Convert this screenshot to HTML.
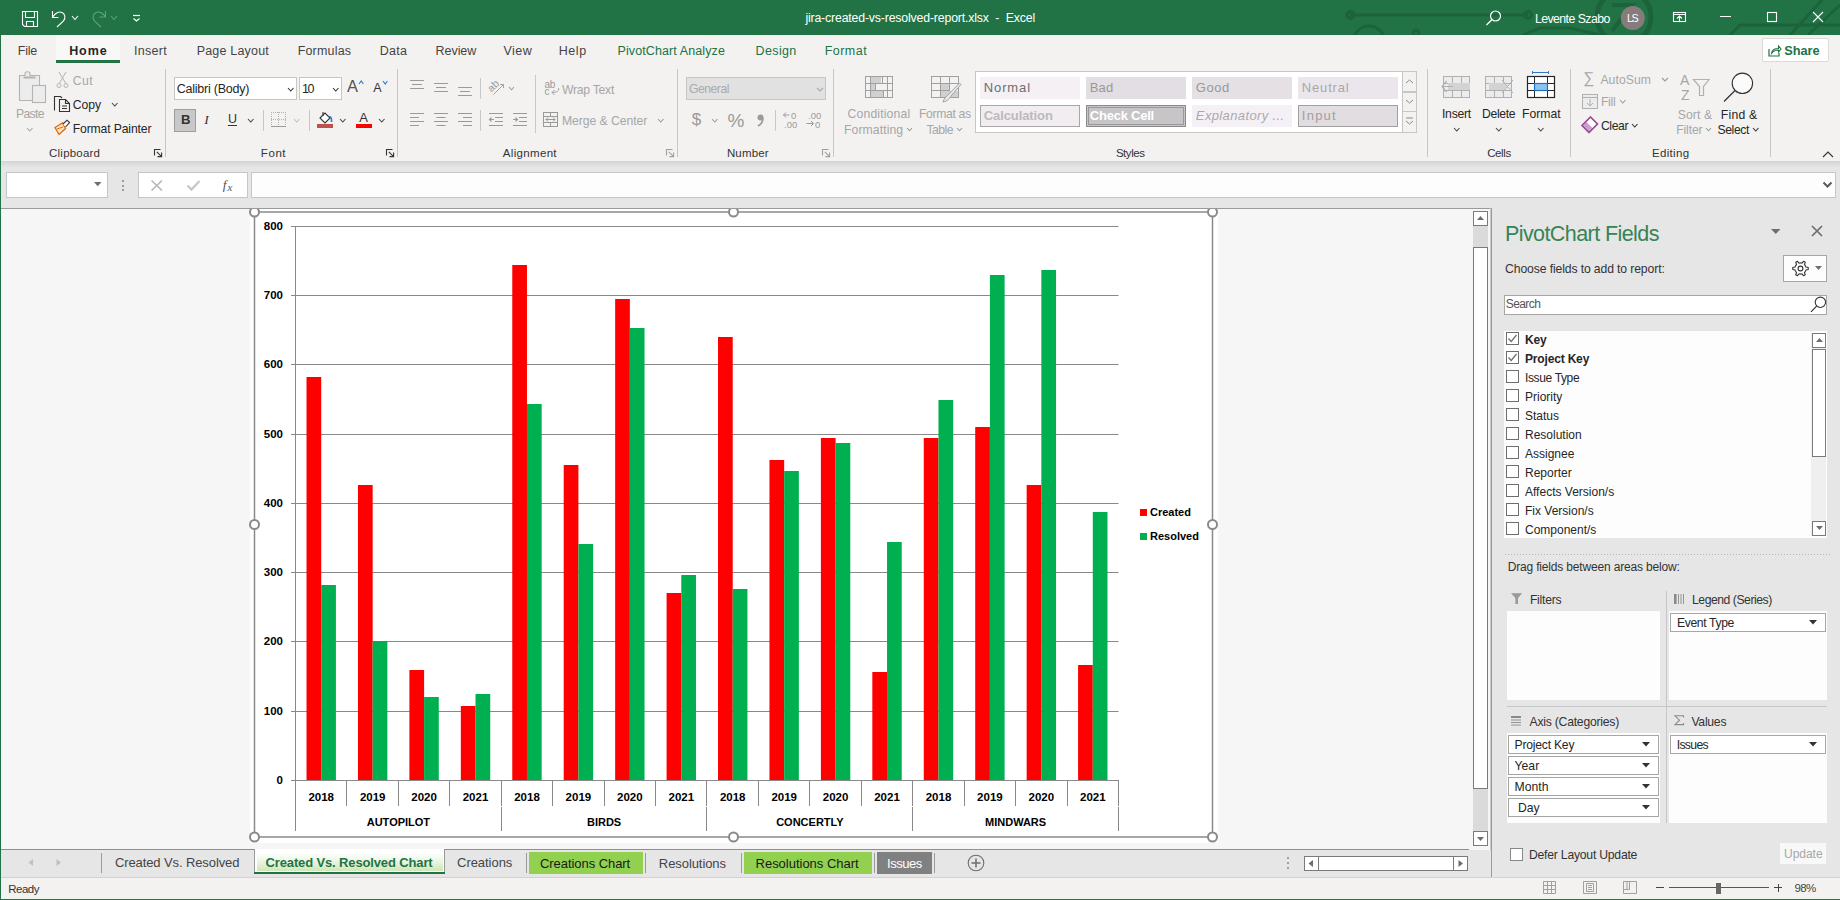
<!DOCTYPE html>
<html><head><meta charset="utf-8">
<style>
*{margin:0;padding:0;box-sizing:border-box}
html,body{width:1840px;height:900px;overflow:hidden;background:#f3f2f1;font-family:"Liberation Sans",sans-serif;color:#262626}
.a{position:absolute;white-space:pre}
svg{overflow:visible}

.tb{position:absolute;left:0;top:0;width:1840px;height:35px;background:#217346}
.rib{position:absolute;left:1px;top:35px;width:1839px;height:127px;background:#f3f2f1}
.fbar{position:absolute;left:1px;top:162px;width:1839px;height:46px;background:#e6e6e6}
.ws{position:absolute;left:1px;top:208px;width:1490px;height:642px;background:#f6f6f6;border-top:1px solid #9a9a9a}
.st{position:absolute;left:1px;top:850px;width:1490px;height:27px;background:#e6e6e6}
.sb{position:absolute;left:1px;top:877px;width:1839px;height:22px;background:#f3f2f1;border-top:1px solid #d2d2d2}
.pv{position:absolute;left:1491px;top:208px;width:349px;height:669px;background:#e6e6e6}
.ab{position:absolute}

</style></head><body>
<div class="tb"></div>
<div class="ab" style="left:0px;top:35px;width:1px;height:865px;background:#217346"></div>
<div class="ab" style="left:0px;top:899px;width:1840px;height:1px;background:#217346"></div>
<svg class="ab" style="left:1330px;top:0px;" width="510" height="35" viewBox="0 0 510 35">
<line x1="1350" y1="15" x2="1528" y2="15" stroke="#1c633c" stroke-width="3" transform="translate(-1330,0)"/>
<g transform="translate(-1330,0)" fill="none" stroke="#1c633c" stroke-width="3">
<circle cx="1350.5" cy="15" r="3.5"/><circle cx="1528" cy="15" r="3.5"/>
<circle cx="1369" cy="42" r="16"/><circle cx="1416" cy="33" r="3"/>
<circle cx="1624" cy="17" r="27" stroke-width="5"/>
<path d="M1612 5 H1632 L1612 31" stroke-width="4"/>
<path d="M1730 35 L1740 25 H1840"/>
<path d="M1790 35 L1822 0"/><path d="M1808 35 L1840 5"/>
<path d="M1523 35 L1540 28 H1570 L1600 35"/>
</g></svg>
<svg class="ab" style="left:20px;top:9px;" width="20" height="20" viewBox="0 0 20 20"><path d="M2.5 2.5 H17.5 V17.5 H4.5 L2.5 15.5 Z M5.5 2.5 V8.5 H14.5 V2.5 M6.5 17.5 V12.5 H13.5 V17.5" fill="none" stroke="#fff" stroke-width="1.1"/></svg>
<svg class="ab" style="left:50px;top:9px;" width="20" height="20" viewBox="0 0 20 20"><path d="M2.5 2 V8.5 H8.5 M2.8 8 C5 4 9 2 12 3.5 C15 5 16 8.5 13.5 12 L7 18" fill="none" stroke="#fff" stroke-width="1.1"/></svg>
<svg class="ab" style="left:71px;top:15px;" width="8" height="5.5" viewBox="0 0 8 5.5"><path d="M1 1 L4.0 4.5 L7 1" fill="none" stroke="#fff" stroke-width="1.1"/></svg>
<svg class="ab" style="left:89px;top:9px;" width="20" height="20" viewBox="0 0 20 20"><path d="M16.5 2 V8 H10.5 M16.2 7.5 C14 4 10 2 7 3.5 C4 5 3 8.5 5.5 12 L12 18" fill="none" stroke="#5f9f7c" stroke-width="1.1"/></svg>
<svg class="ab" style="left:110px;top:15px;" width="8" height="5.5" viewBox="0 0 8 5.5"><path d="M1 1 L4.0 4.5 L7 1" fill="none" stroke="#5f9f7c" stroke-width="1.1"/></svg>
<svg class="ab" style="left:132px;top:11px;" width="10" height="12" viewBox="0 0 10 12"><path d="M1 4.5 H8" stroke="#fff" stroke-width="1.2"/><path d="M1.5 7.5 L4.5 10 L7.5 7.5" fill="none" stroke="#fff" stroke-width="1.2"/></svg>
<div class="a" style="left:805.38px;top:12.13px;font-size:12.3px;line-height:12.3px;color:#fff;letter-spacing:-0.164px">jira-created-vs-resolved-report.xlsx  -  Excel</div>
<svg class="ab" style="left:1484px;top:8px;" width="20" height="20" viewBox="0 0 20 20"><circle cx="11.5" cy="8" r="5" fill="none" stroke="#fff" stroke-width="1.2"/><path d="M7.8 11.7 L2.5 17" stroke="#fff" stroke-width="1.3"/></svg>
<div class="a" style="left:1534.88px;top:13.13px;font-size:12.3px;line-height:12.3px;color:#fff;letter-spacing:-0.551px">Levente Szabo</div>
<svg class="ab" style="left:1620px;top:5px;" width="26" height="26" viewBox="0 0 26 26"><circle cx="12.8" cy="12.9" r="12" fill="#877c7d"/></svg>
<div class="a" style="left:1626.96px;top:13.27px;font-size:10.8px;line-height:10.8px;color:#fff;letter-spacing:-1.500px">LS</div>
<svg class="ab" style="left:1672px;top:11px;" width="16" height="12" viewBox="0 0 16 12"><rect x="1.5" y="1.5" width="12" height="9" fill="none" stroke="#fff" stroke-width="1.1"/><path d="M1.5 3.5 H13.5 M7.5 10.5 V5 M5 7.5 L7.5 5 L10 7.5" fill="none" stroke="#fff" stroke-width="1.1"/></svg>
<div class="ab" style="left:1720px;top:16px;width:11px;height:1px;background:#fff"></div>
<svg class="ab" style="left:1766px;top:11px;" width="12" height="12" viewBox="0 0 12 12"><rect x="1.5" y="1.5" width="9" height="9" fill="none" stroke="#fff" stroke-width="1.1"/></svg>
<svg class="ab" style="left:1812px;top:11px;" width="12" height="12" viewBox="0 0 12 12"><path d="M1 1 L11 11 M11 1 L1 11" stroke="#fff" stroke-width="1.1"/></svg>
<div class="rib"></div>
<div class="ab" style="left:56px;top:35px;width:64px;height:28px;background:#f9f8f7"></div>
<div class="ab" style="left:56px;top:60px;width:64px;height:3px;background:#217346"></div>
<div class="a" style="left:17.68px;top:44.90px;font-size:12.5px;line-height:12.5px;color:#444;letter-spacing:-0.169px">File</div>
<div class="a" style="left:133.88px;top:44.90px;font-size:12.5px;line-height:12.5px;color:#444;letter-spacing:0.297px">Insert</div>
<div class="a" style="left:196.68px;top:44.90px;font-size:12.5px;line-height:12.5px;color:#444;letter-spacing:0.195px">Page Layout</div>
<div class="a" style="left:297.68px;top:44.90px;font-size:12.5px;line-height:12.5px;color:#444;letter-spacing:0.179px">Formulas</div>
<div class="a" style="left:379.68px;top:44.90px;font-size:12.5px;line-height:12.5px;color:#444;letter-spacing:0.315px">Data</div>
<div class="a" style="left:435.57px;top:44.90px;font-size:12.5px;line-height:12.5px;color:#444;letter-spacing:-0.050px">Review</div>
<div class="a" style="left:503.57px;top:44.90px;font-size:12.5px;line-height:12.5px;color:#444;letter-spacing:0.425px">View</div>
<div class="a" style="left:558.67px;top:44.90px;font-size:12.5px;line-height:12.5px;color:#444;letter-spacing:0.577px">Help</div>
<div class="a" style="left:69.17px;top:44.90px;font-size:12.5px;line-height:12.5px;color:#262626;font-weight:700;letter-spacing:0.905px">Home</div>
<div class="a" style="left:617.48px;top:44.90px;font-size:12.5px;line-height:12.5px;color:#217346;letter-spacing:0.108px">PivotChart Analyze</div>
<div class="a" style="left:755.58px;top:44.90px;font-size:12.5px;line-height:12.5px;color:#217346;letter-spacing:0.366px">Design</div>
<div class="a" style="left:824.67px;top:44.90px;font-size:12.5px;line-height:12.5px;color:#217346;letter-spacing:0.471px">Format</div>
<div class="ab" style="left:1762px;top:38px;width:67px;height:24px;background:#fff;border:1px solid #dcdad8;border-radius:2px"></div>
<svg class="ab" style="left:1768px;top:44px;" width="14" height="13" viewBox="0 0 14 13"><path d="M1 5 V12 H11 V9" fill="none" stroke="#217346" stroke-width="1.2"/><path d="M3.5 9.5 C4 6 7 4.5 10.5 4.5 V2 L13 5 L10.5 8 V6 C8 6 5.5 7 3.5 9.5Z" fill="none" stroke="#217346" stroke-width="1.1"/></svg>
<div class="a" style="left:1784.36px;top:44.85px;font-size:12.8px;line-height:12.8px;color:#217346;font-weight:700;letter-spacing:-0.075px">Share</div>
<svg class="ab" style="left:17px;top:71px;" width="32" height="34" viewBox="0 0 32 34">
<path d="M2.5 4.5 H8 V2.5 C8 1.5 9 0.8 10.5 0.8 C12 0.8 13 1.5 13 2.5 V4.5 H22.5 V29.5 H2.5 Z" fill="#ececec" stroke="#b3b3b3" stroke-width="1.1"/>
<path d="M6.5 6.5 H18.5" stroke="#b3b3b3" stroke-width="2"/>
<rect x="15.5" y="14.5" width="13" height="17" fill="#ececec" stroke="#b3b3b3" stroke-width="1.1"/></svg>
<div class="a" style="left:16.09px;top:108.15px;font-size:12.2px;line-height:12.2px;color:#a6a6a6;letter-spacing:-0.688px">Paste</div>
<svg class="ab" style="left:26px;top:127px;" width="7.5" height="5" viewBox="0 0 7.5 5"><path d="M1 1 L3.75 4 L6.5 1" fill="none" stroke="#a6a6a6" stroke-width="1.1"/></svg>
<svg class="ab" style="left:56px;top:71px;" width="13" height="18" viewBox="0 0 13 18"><path d="M3 1 L9.5 12 M10 1 L3.5 12" stroke="#b3b3b3" stroke-width="1"/><circle cx="3" cy="14.5" r="2" fill="none" stroke="#b3b3b3"/><circle cx="10" cy="14.5" r="2" fill="none" stroke="#b3b3b3"/></svg>
<div class="a" style="left:72.69px;top:75.45px;font-size:12.2px;line-height:12.2px;color:#a6a6a6;letter-spacing:0.476px">Cut</div>
<svg class="ab" style="left:53px;top:95px;" width="18" height="18" viewBox="0 0 18 18"><path d="M1.5 15.5 V1.5 H7.5 L9 3" fill="none" stroke="#333" stroke-width="1.1"/><path d="M6.5 4.5 H12.5 L16.5 8.5 V16.5 H6.5 Z M12.5 4.5 V8.5 H16.5 M9 11 H14 M9 13.5 H14" fill="none" stroke="#333" stroke-width="1.1"/></svg>
<div class="a" style="left:72.69px;top:99.05px;font-size:12.2px;line-height:12.2px;color:#262626;letter-spacing:0.022px">Copy</div>
<svg class="ab" style="left:110.7px;top:102px;" width="7.5" height="5" viewBox="0 0 7.5 5"><path d="M1 1 L3.75 4 L6.5 1" fill="none" stroke="#444" stroke-width="1.1"/></svg>
<svg class="ab" style="left:53px;top:119px;" width="18" height="17" viewBox="0 0 18 17"><path d="M2 8.5 L9.5 4 L12.5 9.5 L6 15.5 Z" fill="#fbe3c8" stroke="#e36c0a" stroke-width="1.3"/>
<path d="M4 10 L10 8" stroke="#e36c0a" stroke-width="1"/>
<path d="M10 5 L14 1.2 L16.5 3.5 L12.5 8" fill="#fff" stroke="#333" stroke-width="1.1"/></svg>
<div class="a" style="left:72.69px;top:123.15px;font-size:12.2px;line-height:12.2px;color:#262626;letter-spacing:-0.138px">Format Painter</div>
<div class="a" style="left:49.12px;top:148.06px;font-size:11.5px;line-height:11.5px;color:#333;letter-spacing:0.202px">Clipboard</div>
<svg class="ab" style="left:154px;top:149px;" width="10" height="10" viewBox="0 0 10 10"><path d="M0.5 6.5 V0.5 H6.5" fill="none" stroke="#333" stroke-width="1.1"/><path d="M2.8 2.8 L7.6 7.6 M3.5 7.6 H7.6 V3.5" fill="none" stroke="#333" stroke-width="1.1"/></svg>
<div class="ab" style="left:165px;top:69px;width:1px;height:88px;background:#c8c6c4"></div>
<div class="ab" style="left:174px;top:77px;width:123px;height:23px;background:#fff;border:1px solid #c6c6c6"></div>
<div class="a" style="left:176.78px;top:82.70px;font-size:12.5px;line-height:12.5px;color:#262626;letter-spacing:-0.244px">Calibri (Body)</div>
<svg class="ab" style="left:287px;top:87px;" width="7.5" height="5" viewBox="0 0 7.5 5"><path d="M1 1 L3.75 4 L6.5 1" fill="none" stroke="#333" stroke-width="1.1"/></svg>
<div class="ab" style="left:299px;top:77px;width:43px;height:23px;background:#fff;border:1px solid #c6c6c6"></div>
<div class="a" style="left:302.07px;top:82.70px;font-size:12.5px;line-height:12.5px;color:#262626;letter-spacing:-1.500px">10</div>
<svg class="ab" style="left:332px;top:87px;" width="7.5" height="5" viewBox="0 0 7.5 5"><path d="M1 1 L3.75 4 L6.5 1" fill="none" stroke="#333" stroke-width="1.1"/></svg>
<div class="a" style="left:347.07px;top:78.36px;font-size:16.5px;line-height:16.5px;color:#555">A</div>
<svg class="ab" style="left:358px;top:80px;" width="7" height="5" viewBox="0 0 7 5"><path d="M1 4 L3.2 1 L5.4 4" fill="none" stroke="#2b79d0" stroke-width="1.1"/></svg>
<div class="a" style="left:373.18px;top:82.20px;font-size:12.5px;line-height:12.5px;color:#333">A</div>
<svg class="ab" style="left:382px;top:80px;" width="7" height="5" viewBox="0 0 7 5"><path d="M1 1 L3.2 4 L5.4 1" fill="none" stroke="#2b79d0" stroke-width="1.1"/></svg>
<div class="ab" style="left:174px;top:109px;width:22px;height:23px;background:#c8c8c8;border:1px solid #9d9d9d"></div>
<div class="a" style="left:180.94px;top:113.39px;font-size:13.2px;line-height:13.2px;color:#333;font-weight:700">B</div>
<div class="a" style="left:204.32px;top:112.74px;font-size:13.5px;line-height:13.5px;color:#333;font-style:italic;font-family:'Liberation Serif',serif">I</div>
<div class="a" style="left:227.88px;top:112.90px;font-size:12.5px;line-height:12.5px;color:#333">U</div>
<div class="ab" style="left:228px;top:125px;width:9px;height:1px;background:#333"></div>
<svg class="ab" style="left:246.5px;top:118px;" width="7.5" height="5" viewBox="0 0 7.5 5"><path d="M1 1 L3.75 4 L6.5 1" fill="none" stroke="#444" stroke-width="1.1"/></svg>
<div class="ab" style="left:263px;top:110px;width:1px;height:21px;background:#c8c6c4"></div>
<svg class="ab" style="left:270px;top:111px;" width="17" height="17" viewBox="0 0 17 17"><g fill="#b3b3b3"><rect x="1" y="1" width="1" height="1"/><rect x="1" y="11" width="1" height="1"/><rect x="1" y="13" width="1" height="1"/><rect x="1" y="15" width="1" height="1"/><rect x="1" y="3" width="1" height="1"/><rect x="1" y="5" width="1" height="1"/><rect x="1" y="7" width="1" height="1"/><rect x="1" y="8" width="1" height="1"/><rect x="1" y="9" width="1" height="1"/><rect x="11" y="1" width="1" height="1"/><rect x="11" y="8" width="1" height="1"/><rect x="13" y="1" width="1" height="1"/><rect x="13" y="8" width="1" height="1"/><rect x="15" y="1" width="1" height="1"/><rect x="15" y="11" width="1" height="1"/><rect x="15" y="13" width="1" height="1"/><rect x="15" y="15" width="1" height="1"/><rect x="15" y="3" width="1" height="1"/><rect x="15" y="5" width="1" height="1"/><rect x="15" y="7" width="1" height="1"/><rect x="15" y="8" width="1" height="1"/><rect x="15" y="9" width="1" height="1"/><rect x="3" y="1" width="1" height="1"/><rect x="3" y="8" width="1" height="1"/><rect x="5" y="1" width="1" height="1"/><rect x="5" y="8" width="1" height="1"/><rect x="7" y="1" width="1" height="1"/><rect x="7" y="8" width="1" height="1"/><rect x="8" y="1" width="1" height="1"/><rect x="8" y="11" width="1" height="1"/><rect x="8" y="13" width="1" height="1"/><rect x="8" y="15" width="1" height="1"/><rect x="8" y="3" width="1" height="1"/><rect x="8" y="5" width="1" height="1"/><rect x="8" y="7" width="1" height="1"/><rect x="8" y="9" width="1" height="1"/><rect x="9" y="1" width="1" height="1"/><rect x="9" y="8" width="1" height="1"/></g><path d="M1 15.5 H16" stroke="#9a9a9a" stroke-width="1"/></svg>
<svg class="ab" style="left:292.5px;top:118px;" width="7.5" height="5" viewBox="0 0 7.5 5"><path d="M1 1 L3.75 4 L6.5 1" fill="none" stroke="#c0c0c0" stroke-width="1.1"/></svg>
<div class="ab" style="left:309px;top:110px;width:1px;height:21px;background:#c8c6c4"></div>
<svg class="ab" style="left:317px;top:111px;" width="17" height="18" viewBox="0 0 17 18"><path d="M3 7 L8 2 L13 7 L8 12 Z" fill="#fff" stroke="#333" stroke-width="1.1"/><path d="M6 1 V5" stroke="#333" stroke-width="1.1"/><path d="M11.5 5.5 C13.5 5.5 14.5 7 14.5 9 V11" fill="none" stroke="#2b79d0" stroke-width="1.6"/><rect x="0" y="13" width="16" height="4" fill="#c0504d"/></svg>
<svg class="ab" style="left:338.5px;top:118px;" width="7.5" height="5" viewBox="0 0 7.5 5"><path d="M1 1 L3.75 4 L6.5 1" fill="none" stroke="#444" stroke-width="1.1"/></svg>
<div class="a" style="left:359.15px;top:111.12px;font-size:13px;line-height:13px;color:#333">A</div>
<div class="ab" style="left:356px;top:124px;width:16px;height:4px;background:#ff0000"></div>
<svg class="ab" style="left:377.5px;top:118px;" width="7.5" height="5" viewBox="0 0 7.5 5"><path d="M1 1 L3.75 4 L6.5 1" fill="none" stroke="#444" stroke-width="1.1"/></svg>
<div class="a" style="left:260.82px;top:148.06px;font-size:11.5px;line-height:11.5px;color:#333;letter-spacing:0.578px">Font</div>
<svg class="ab" style="left:386px;top:149px;" width="10" height="10" viewBox="0 0 10 10"><path d="M0.5 6.5 V0.5 H6.5" fill="none" stroke="#333" stroke-width="1.1"/><path d="M2.8 2.8 L7.6 7.6 M3.5 7.6 H7.6 V3.5" fill="none" stroke="#333" stroke-width="1.1"/></svg>
<div class="ab" style="left:397px;top:69px;width:1px;height:88px;background:#c8c6c4"></div>
<svg class="ab" style="left:410px;top:80px;" width="15" height="11" viewBox="0 0 15 11"><path d="M0 0.5 H14 M2 4.5 H12 M0 8.5 H14" stroke="#9a9a9a" stroke-width="1.2"/></svg>
<svg class="ab" style="left:434px;top:83px;" width="15" height="11" viewBox="0 0 15 11"><path d="M0 0.5 H14 M2 4.5 H12 M0 8.5 H14" stroke="#9a9a9a" stroke-width="1.2"/></svg>
<svg class="ab" style="left:458px;top:87px;" width="15" height="11" viewBox="0 0 15 11"><path d="M0 0.5 H14 M2 4.5 H12 M0 8.5 H14" stroke="#9a9a9a" stroke-width="1.2"/></svg>
<div class="ab" style="left:480px;top:78px;width:1px;height:21px;background:#c8c8c8"></div>
<svg class="ab" style="left:485px;top:77px;" width="22" height="20" viewBox="0 0 22 20"><text x="0" y="0" transform="translate(6.5 15.5) rotate(-45)" font-family="Liberation Sans" font-size="10.5" fill="#9a9a9a">ab</text><path d="M8.5 17.5 L18.5 7.5" stroke="#9a9a9a" stroke-width="0.9"/><path d="M15 7.5 H18.5 V11" fill="none" stroke="#9a9a9a" stroke-width="0.9"/></svg>
<svg class="ab" style="left:508px;top:86px;" width="7" height="4.8" viewBox="0 0 7 4.8"><path d="M1 1 L3.5 3.8 L6 1" fill="none" stroke="#9a9a9a" stroke-width="1.1"/></svg>
<div class="ab" style="left:535px;top:75px;width:1px;height:58px;background:#c8c8c8"></div>
<svg class="ab" style="left:544px;top:78px;" width="17" height="18" viewBox="0 0 17 18"><text x="0.5" y="9.5" font-family="Liberation Sans" font-size="10" fill="#9a9a9a" letter-spacing="-0.3">ab</text><text x="0.5" y="16.5" font-family="Liberation Sans" font-size="10" fill="#9a9a9a">c</text><path d="M14.5 10 C15.5 12.5 13 14.5 8 14.5 M10.5 12 L8 14.5 L10.5 17" fill="none" stroke="#9a9a9a" stroke-width="0.9"/></svg>
<div class="a" style="left:561.99px;top:83.55px;font-size:12.2px;line-height:12.2px;color:#a6a6a6;letter-spacing:-0.263px">Wrap Text</div>
<svg class="ab" style="left:410px;top:113px;" width="15" height="13" viewBox="0 0 15 13"><path d="M0 0.5 H14 M0 4.5 H9 M0 8.5 H14 M0 12.5 H9" stroke="#9a9a9a" stroke-width="1.2"/></svg>
<svg class="ab" style="left:434px;top:113px;" width="15" height="13" viewBox="0 0 15 13"><path d="M0 0.5 H14 M2.5 4.5 H11.5 M0 8.5 H14 M2.5 12.5 H11.5" stroke="#9a9a9a" stroke-width="1.2"/></svg>
<svg class="ab" style="left:458px;top:113px;" width="15" height="13" viewBox="0 0 15 13"><path d="M0 0.5 H14 M5 4.5 H14 M0 8.5 H14 M5 12.5 H14" stroke="#9a9a9a" stroke-width="1.2"/></svg>
<div class="ab" style="left:480px;top:110px;width:1px;height:21px;background:#c8c8c8"></div>
<svg class="ab" style="left:489px;top:113px;" width="15" height="13" viewBox="0 0 15 13"><path d="M0 0.5 H14 M6 4.5 H14 M0 12.5 H14 M6 8.5 H14 M5 6.5 H0.5 M2.5 4.5 L0.5 6.5 L2.5 8.5" fill="none" stroke="#9a9a9a" stroke-width="1.1"/></svg>
<svg class="ab" style="left:513px;top:113px;" width="15" height="13" viewBox="0 0 15 13"><path d="M0 0.5 H14 M6 4.5 H14 M0 12.5 H14 M6 8.5 H14 M0 6.5 H4.5 M2.5 4.5 L4.5 6.5 L2.5 8.5" fill="none" stroke="#9a9a9a" stroke-width="1.1"/></svg>
<svg class="ab" style="left:543px;top:112px;" width="16" height="16" viewBox="0 0 16 16"><rect x="0.5" y="0.5" width="14" height="14" fill="none" stroke="#9a9a9a"/><path d="M0.5 4.5 H14.5 M0.5 10.5 H14.5 M7.5 0.5 V4.5 M7.5 10.5 V14.5 M3 7.5 H12 M5 5.5 L3 7.5 L5 9.5 M10 5.5 L12 7.5 L10 9.5" fill="none" stroke="#9a9a9a" stroke-width="1"/></svg>
<div class="a" style="left:561.99px;top:114.75px;font-size:12.2px;line-height:12.2px;color:#a6a6a6;letter-spacing:-0.055px">Merge &amp; Center</div>
<svg class="ab" style="left:656.5px;top:118px;" width="7.5" height="5" viewBox="0 0 7.5 5"><path d="M1 1 L3.75 4 L6.5 1" fill="none" stroke="#9a9a9a" stroke-width="1.1"/></svg>
<div class="a" style="left:502.82px;top:148.06px;font-size:11.5px;line-height:11.5px;color:#333;letter-spacing:0.326px">Alignment</div>
<svg class="ab" style="left:666px;top:149px;" width="10" height="10" viewBox="0 0 10 10"><path d="M0.5 6.5 V0.5 H6.5" fill="none" stroke="#a0a0a0" stroke-width="1.1"/><path d="M2.8 2.8 L7.6 7.6 M3.5 7.6 H7.6 V3.5" fill="none" stroke="#a0a0a0" stroke-width="1.1"/></svg>
<div class="ab" style="left:677px;top:69px;width:1px;height:88px;background:#c8c6c4"></div>
<div class="ab" style="left:686px;top:77px;width:140px;height:23px;background:#e1e1e1;border:1px solid #c6c6c6"></div>
<div class="a" style="left:689.09px;top:82.55px;font-size:12.2px;line-height:12.2px;color:#ababab;letter-spacing:-0.507px">General</div>
<svg class="ab" style="left:815.5px;top:87px;" width="8" height="5" viewBox="0 0 8 5"><path d="M1 1 L4.0 4 L7 1" fill="none" stroke="#aaa" stroke-width="1.1"/></svg>
<div class="a" style="left:691.65px;top:110.98px;font-size:17px;line-height:17px;color:#9a9a9a">$</div>
<svg class="ab" style="left:710.7px;top:118px;" width="7.5" height="5" viewBox="0 0 7.5 5"><path d="M1 1 L3.75 4 L6.5 1" fill="none" stroke="#9a9a9a" stroke-width="1.1"/></svg>
<div class="a" style="left:727.55px;top:110.66px;font-size:19px;line-height:19px;color:#9a9a9a">%</div>
<svg class="ab" style="left:756px;top:114px;" width="9" height="13" viewBox="0 0 9 13"><circle cx="4.5" cy="3.5" r="3" fill="#9a9a9a"/><path d="M6.8 4 C7 8 5 10.5 2 12" fill="none" stroke="#9a9a9a" stroke-width="1.8"/></svg>
<div class="ab" style="left:775px;top:110px;width:1px;height:21px;background:#c8c8c8"></div>
<svg class="ab" style="left:782px;top:110px;" width="18" height="19" viewBox="0 0 18 19"><path d="M1.5 5 H7.5 M4 2.5 L1.5 5 L4 7.5" fill="none" stroke="#9a9a9a" stroke-width="1"/><text x="9" y="9" font-family="Liberation Sans" font-size="9.5" fill="#9a9a9a">0</text><text x="2" y="18" font-family="Liberation Sans" font-size="9.5" fill="#9a9a9a">.00</text></svg>
<svg class="ab" style="left:806px;top:110px;" width="18" height="19" viewBox="0 0 18 19"><text x="2" y="9" font-family="Liberation Sans" font-size="9.5" fill="#9a9a9a">.00</text><path d="M0.5 13.5 H7.5 M5 11 L7.5 13.5 L5 16" fill="none" stroke="#9a9a9a" stroke-width="1"/><text x="9" y="18" font-family="Liberation Sans" font-size="9.5" fill="#9a9a9a">0</text></svg>
<div class="a" style="left:726.92px;top:148.06px;font-size:11.5px;line-height:11.5px;color:#333;letter-spacing:0.149px">Number</div>
<svg class="ab" style="left:822px;top:149px;" width="10" height="10" viewBox="0 0 10 10"><path d="M0.5 6.5 V0.5 H6.5" fill="none" stroke="#a0a0a0" stroke-width="1.1"/><path d="M2.8 2.8 L7.6 7.6 M3.5 7.6 H7.6 V3.5" fill="none" stroke="#a0a0a0" stroke-width="1.1"/></svg>
<div class="ab" style="left:833px;top:69px;width:1px;height:88px;background:#c8c6c4"></div>
<svg class="ab" style="left:864px;top:75px;" width="30" height="24" viewBox="0 0 30 24"><rect x="6" y="2" width="11" height="6" fill="#d0d0d0"/><rect x="6" y="9" width="5" height="6" fill="#d0d0d0"/><rect x="6" y="16" width="13" height="6" fill="#d0d0d0"/>
<g fill="none" stroke="#a0a0a0" stroke-width="1"><rect x="1.5" y="1.5" width="27" height="21"/><path d="M1.5 8.5 H28.5 M1.5 15.5 H28.5 M6.5 1.5 V22.5 M23.5 1.5 V22.5 M18.5 1.5 V8.5 M11.5 8.5 V15.5 M19.5 15.5 V22.5"/></g></svg>
<div class="a" style="left:847.59px;top:108.15px;font-size:12.2px;line-height:12.2px;color:#a6a6a6;letter-spacing:0.154px">Conditional</div>
<div class="a" style="left:843.99px;top:123.75px;font-size:12.2px;line-height:12.2px;color:#a6a6a6;letter-spacing:0.097px">Formatting</div>
<svg class="ab" style="left:906px;top:127px;" width="7" height="4.8" viewBox="0 0 7 4.8"><path d="M1 1 L3.5 3.8 L6 1" fill="none" stroke="#9a9a9a" stroke-width="1.1"/></svg>
<svg class="ab" style="left:930px;top:75px;" width="32" height="29" viewBox="0 0 32 29"><rect x="10" y="9" width="9" height="6" fill="#d0d0d0"/><rect x="10" y="16" width="18" height="6" fill="#d0d0d0"/>
<g fill="none" stroke="#a0a0a0" stroke-width="1"><rect x="1.5" y="1.5" width="27" height="21"/><path d="M1.5 8.5 H28.5 M1.5 15.5 H20 M10.5 1.5 V22.5 M19.5 1.5 V16"/></g>
<path d="M29.5 8 L31 9.5 L21 21 C20 23 18 26 13 27 C14 24 16 21 18.5 19.5 Z" fill="#e8e8e8" stroke="#a0a0a0" stroke-width="1"/></svg>
<div class="a" style="left:918.99px;top:108.15px;font-size:12.2px;line-height:12.2px;color:#a6a6a6;letter-spacing:-0.355px">Format as</div>
<div class="a" style="left:926.39px;top:123.75px;font-size:12.2px;line-height:12.2px;color:#a6a6a6;letter-spacing:-0.480px">Table</div>
<svg class="ab" style="left:955.5px;top:127px;" width="7" height="4.8" viewBox="0 0 7 4.8"><path d="M1 1 L3.5 3.8 L6 1" fill="none" stroke="#9a9a9a" stroke-width="1.1"/></svg>
<div class="ab" style="left:975px;top:71px;width:428px;height:62px;background:#fff;border:1px solid #c6c6c6;border-right:none"></div>
<div class="ab" style="left:980px;top:77px;width:100px;height:22px;background:#f4f0f4"></div>
<div class="a" style="left:983.85px;top:81.12px;font-size:13px;line-height:13px;color:#6e6e6e;letter-spacing:0.859px">Normal</div>
<div class="ab" style="left:1086px;top:77px;width:100px;height:22px;background:#e3dee3"></div>
<div class="a" style="left:1089.85px;top:81.12px;font-size:13px;line-height:13px;color:#999;letter-spacing:0.080px">Bad</div>
<div class="ab" style="left:1192px;top:77px;width:100px;height:22px;background:#e4e0e4"></div>
<div class="a" style="left:1195.85px;top:81.12px;font-size:13px;line-height:13px;color:#999;letter-spacing:0.496px">Good</div>
<div class="ab" style="left:1298px;top:77px;width:100px;height:22px;background:#ebe6eb"></div>
<div class="a" style="left:1301.85px;top:81.12px;font-size:13px;line-height:13px;color:#a8a8a8;letter-spacing:0.813px">Neutral</div>
<div class="ab" style="left:980px;top:105px;width:100px;height:22px;background:#f1edf1;border:1px solid #a8a8a8"></div>
<div class="a" style="left:983.85px;top:109.12px;font-size:13px;line-height:13px;color:#bdb9bd;font-weight:700;letter-spacing:-0.108px">Calculation</div>
<div class="ab" style="left:1086px;top:105px;width:100px;height:22px;background:#c7c5c7;border:1px solid #8a8a8a"></div>
<div class="ab" style="left:1088px;top:107px;width:96px;height:18px;border:1px solid #9a9a9a"></div>
<div class="a" style="left:1089.85px;top:109.12px;font-size:13px;line-height:13px;color:#fff;font-weight:700;letter-spacing:-0.243px">Check Cell</div>
<div class="ab" style="left:1192px;top:105px;width:100px;height:22px;background:#f5f0f5"></div>
<div class="a" style="left:1195.85px;top:109.12px;font-size:13px;line-height:13px;color:#aaa;font-style:italic;letter-spacing:0.371px">Explanatory ...</div>
<div class="ab" style="left:1298px;top:105px;width:100px;height:22px;background:#e1dde1;border:1px solid #a0a0a0"></div>
<div class="a" style="left:1301.85px;top:109.12px;font-size:13px;line-height:13px;color:#a0a0a0;letter-spacing:1.220px">Input</div>
<div class="ab" style="left:1402px;top:71px;width:15px;height:21px;background:#f3f2f1;border:1px solid #c6c6c6"></div>
<div class="ab" style="left:1402px;top:92px;width:15px;height:20px;background:#f3f2f1;border:1px solid #c6c6c6"></div>
<div class="ab" style="left:1402px;top:111px;width:15px;height:22px;background:#f3f2f1;border:1px solid #c6c6c6"></div>
<svg class="ab" style="left:1405px;top:79px;" width="9" height="5" viewBox="0 0 9 5"><path d="M1 4 L4.5 1 L8 4" fill="none" stroke="#8a8a8a" stroke-width="1"/></svg>
<svg class="ab" style="left:1405px;top:99px;" width="9" height="5" viewBox="0 0 9 5"><path d="M1 1 L4.5 4 L8 1" fill="none" stroke="#8a8a8a" stroke-width="1"/></svg>
<svg class="ab" style="left:1405px;top:117px;" width="9" height="9" viewBox="0 0 9 9"><path d="M1 1 H8 M1 4 L4.5 7 L8 4" fill="none" stroke="#8a8a8a" stroke-width="1"/></svg>
<div class="a" style="left:1115.92px;top:148.06px;font-size:11.5px;line-height:11.5px;color:#333;letter-spacing:-0.456px">Styles</div>
<div class="ab" style="left:1427px;top:69px;width:1px;height:88px;background:#c8c6c4"></div>
<svg class="ab" style="left:1441px;top:75px;" width="32" height="24" viewBox="0 0 32 24"><rect x="2.5" y="1.5" width="26" height="21" fill="#ececec" stroke="#b0b0b0"/><path d="M2.5 8.5 H28.5 M2.5 15.5 H28.5 M11.5 1.5 V22.5 M20.5 1.5 V22.5" stroke="#b0b0b0"/>
<rect x="7" y="8" width="22" height="7" fill="#d3d3d3"/><path d="M1 11.5 H12 M5.5 6 L1 11.5 L5.5 17" fill="none" stroke="#b0b0b0" stroke-width="1.2"/></svg>
<div class="a" style="left:1441.99px;top:108.15px;font-size:12.2px;line-height:12.2px;color:#262626;letter-spacing:-0.253px">Insert</div>
<svg class="ab" style="left:1453px;top:127px;" width="7.5" height="5" viewBox="0 0 7.5 5"><path d="M1 1 L3.75 4 L6.5 1" fill="none" stroke="#444" stroke-width="1.1"/></svg>
<svg class="ab" style="left:1484px;top:75px;" width="32" height="24" viewBox="0 0 32 24"><rect x="1.5" y="1.5" width="26" height="21" fill="#ececec" stroke="#b0b0b0"/><path d="M1.5 8.5 H27.5 M1.5 15.5 H27.5 M10.5 1.5 V22.5 M19.5 1.5 V22.5" stroke="#b0b0b0"/>
<path d="M5 8 H20 L23 11.5 L20 15 H5 Z" fill="#d3d3d3"/><path d="M18 5 L29 18 M29 5 L18 18" stroke="#b0b0b0" stroke-width="1"/></svg>
<div class="a" style="left:1481.99px;top:108.15px;font-size:12.2px;line-height:12.2px;color:#262626;letter-spacing:-0.323px">Delete</div>
<svg class="ab" style="left:1495px;top:127px;" width="7.5" height="5" viewBox="0 0 7.5 5"><path d="M1 1 L3.75 4 L6.5 1" fill="none" stroke="#444" stroke-width="1.1"/></svg>
<svg class="ab" style="left:1526px;top:70px;" width="30" height="29" viewBox="0 0 30 29"><path d="M6.5 1 V4 M22.5 1 V4 M6.5 2.5 H22.5" stroke="#2b79d0" stroke-width="1"/>
<rect x="1.5" y="6.5" width="27" height="21" fill="#fff" stroke="#262626" stroke-width="1.2"/><path d="M1.5 13.5 H28.5 M1.5 20.5 H28.5 M8.5 6.5 V27.5 M21.5 6.5 V27.5" stroke="#262626" stroke-width="1"/>
<rect x="8.5" y="13.5" width="13" height="7" fill="#8fc3ef" stroke="#1f6fc5" stroke-width="1.2"/></svg>
<div class="a" style="left:1521.99px;top:108.15px;font-size:12.2px;line-height:12.2px;color:#262626">Format</div>
<svg class="ab" style="left:1537px;top:127px;" width="7.5" height="5" viewBox="0 0 7.5 5"><path d="M1 1 L3.75 4 L6.5 1" fill="none" stroke="#444" stroke-width="1.1"/></svg>
<div class="a" style="left:1487.22px;top:148.06px;font-size:11.5px;line-height:11.5px;color:#333;letter-spacing:-0.403px">Cells</div>
<div class="ab" style="left:1570px;top:69px;width:1px;height:88px;background:#c8c6c4"></div>
<div class="a" style="left:1583.22px;top:70.42px;font-size:15.5px;line-height:15.5px;color:#a6a6a6">∑</div>
<div class="a" style="left:1600.39px;top:74.05px;font-size:12.2px;line-height:12.2px;color:#a6a6a6;letter-spacing:0.080px">AutoSum</div>
<svg class="ab" style="left:1660.7px;top:77px;" width="8" height="5" viewBox="0 0 8 5"><path d="M1 1 L4.0 4 L7 1" fill="none" stroke="#9a9a9a" stroke-width="1.1"/></svg>
<svg class="ab" style="left:1582px;top:94px;" width="17" height="16" viewBox="0 0 17 16"><rect x="0.5" y="0.5" width="15" height="14" fill="#ececec" stroke="#b0b0b0"/><path d="M0.5 3.5 H15.5 M8 5 V12 M5 9 L8 12 L11 9" fill="none" stroke="#b0b0b0"/></svg>
<div class="a" style="left:1600.89px;top:96.05px;font-size:12.2px;line-height:12.2px;color:#a6a6a6;letter-spacing:-0.219px">Fill</div>
<svg class="ab" style="left:1619px;top:99px;" width="7.5" height="5" viewBox="0 0 7.5 5"><path d="M1 1 L3.75 4 L6.5 1" fill="none" stroke="#9a9a9a" stroke-width="1.1"/></svg>
<svg class="ab" style="left:1581px;top:116px;" width="18" height="17" viewBox="0 0 18 17"><path d="M1 9.5 L9.5 1 L16.5 8 L8 16.5 Z" fill="#fff" stroke="#9b4f96" stroke-width="1.3"/><path d="M1.5 9 L5 5.5 L11.5 12 L8 15.8 Z" fill="#cf9fcf"/><path d="M1 9.5 L9.5 1 L16.5 8 L8 16.5 Z" fill="none" stroke="#9b4f96" stroke-width="1.3"/></svg>
<div class="a" style="left:1600.89px;top:119.95px;font-size:12.2px;line-height:12.2px;color:#262626;letter-spacing:-0.351px">Clear</div>
<svg class="ab" style="left:1631px;top:123px;" width="7.5" height="5" viewBox="0 0 7.5 5"><path d="M1 1 L3.75 4 L6.5 1" fill="none" stroke="#333" stroke-width="1.1"/></svg>
<svg class="ab" style="left:1679px;top:72px;" width="32" height="30" viewBox="0 0 32 30"><text x="1" y="13" font-family="Liberation Sans" font-size="14" fill="#a6a6a6">A</text><text x="2" y="28" font-family="Liberation Sans" font-size="14" fill="#a6a6a6">Z</text><path d="M14.5 7.5 H30 L24.5 14.5 V23.5 H20.5 V14.5 Z" fill="none" stroke="#b0b0b0" stroke-width="1.2"/></svg>
<div class="a" style="left:1677.69px;top:108.55px;font-size:12.2px;line-height:12.2px;color:#a6a6a6;letter-spacing:0.129px">Sort &amp;</div>
<div class="a" style="left:1676.19px;top:124.25px;font-size:12.2px;line-height:12.2px;color:#a6a6a6;letter-spacing:-0.135px">Filter</div>
<svg class="ab" style="left:1704.7px;top:127px;" width="7" height="4.8" viewBox="0 0 7 4.8"><path d="M1 1 L3.5 3.8 L6 1" fill="none" stroke="#9a9a9a" stroke-width="1.1"/></svg>
<svg class="ab" style="left:1722px;top:71px;" width="34" height="33" viewBox="0 0 34 33"><circle cx="20.4" cy="12.3" r="10.2" fill="#fbfbfb" stroke="#333" stroke-width="1.1"/><path d="M13 19.5 L2 30.5" stroke="#333" stroke-width="1.2"/></svg>
<div class="a" style="left:1720.79px;top:108.55px;font-size:12.2px;line-height:12.2px;color:#262626;letter-spacing:0.237px">Find &amp;</div>
<div class="a" style="left:1717.59px;top:124.25px;font-size:12.2px;line-height:12.2px;color:#262626;letter-spacing:-0.431px">Select</div>
<svg class="ab" style="left:1751.7px;top:127px;" width="7.5" height="5" viewBox="0 0 7.5 5"><path d="M1 1 L3.75 4 L6.5 1" fill="none" stroke="#333" stroke-width="1.1"/></svg>
<div class="a" style="left:1651.92px;top:148.06px;font-size:11.5px;line-height:11.5px;color:#333;letter-spacing:0.346px">Editing</div>
<div class="ab" style="left:1770px;top:69px;width:1px;height:88px;background:#c8c6c4"></div>
<svg class="ab" style="left:1822px;top:151px;" width="12" height="7" viewBox="0 0 12 7"><path d="M1 6 L6 1 L11 6" fill="none" stroke="#333" stroke-width="1.1"/></svg>
<div class="fbar"></div>
<div class="ab" style="left:1px;top:161px;width:1839px;height:7px;background:linear-gradient(#d3d3d3,#dadada 30%,#e6e6e6)"></div>
<div class="ab" style="left:6px;top:172px;width:102px;height:26px;background:#fff;border:1px solid #c6c6c6"></div>
<svg class="ab" style="left:94px;top:182px;" width="7.5" height="4.2" viewBox="0 0 7.5 4.2"><path d="M0 0 H7.5 L3.75 4.2 Z" fill="#6e6e6e"/></svg>
<div class="ab" style="left:122px;top:180px;width:2px;height:2px;background:#9a9a9a"></div>
<div class="ab" style="left:122px;top:184.5px;width:2px;height:2px;background:#9a9a9a"></div>
<div class="ab" style="left:122px;top:189px;width:2px;height:2px;background:#9a9a9a"></div>
<div class="ab" style="left:138px;top:172px;width:110px;height:26px;background:#fff;border:1px solid #c6c6c6"></div>
<svg class="ab" style="left:150px;top:179px;" width="14" height="13" viewBox="0 0 14 13"><path d="M1.5 1.5 L12 11.5 M12 1.5 L1.5 11.5" stroke="#b3b3b3" stroke-width="1.5"/></svg>
<svg class="ab" style="left:186px;top:179px;" width="15" height="13" viewBox="0 0 15 13"><path d="M1.5 6.5 L5.5 10.5 L13.5 2" fill="none" stroke="#c8c8c8" stroke-width="2.3"/></svg>
<div class="a" style="left:222.82px;top:177.54px;font-size:13.5px;line-height:13.5px;color:#555;font-style:italic;font-family:'Liberation Serif',serif">f</div>
<div class="a" style="left:227.45px;top:182.24px;font-size:11px;line-height:11px;color:#555;font-style:italic;font-family:'Liberation Serif',serif">x</div>
<div class="ab" style="left:251px;top:172px;width:1585px;height:26px;background:#fdfdfd;border:1px solid #c6c6c6"></div>
<svg class="ab" style="left:1822px;top:181px;" width="11" height="8" viewBox="0 0 11 8"><path d="M1.5 1.5 L5.5 5.5 L9.5 1.5" fill="none" stroke="#5a5a5a" stroke-width="2"/></svg>
<div class="ws"></div>
<div class="ab" style="left:1490px;top:208px;width:2px;height:669px;background:#c8c8c8"></div>
<div class="ab" style="left:1472px;top:209px;width:18px;height:640px;background:#f6f6f6"></div>
<div class="ab" style="left:1473px;top:211px;width:15px;height:15px;background:#fff;border:1px solid #7a7a7a"></div>
<svg class="ab" style="left:1477px;top:216px;" width="7" height="4" viewBox="0 0 7 4"><path d="M0 4 H7 L3.5 0 Z" fill="#6e6e6e"/></svg>
<div class="ab" style="left:1473px;top:226px;width:15px;height:605px;background:#dadada"></div>
<div class="ab" style="left:1473px;top:247px;width:15px;height:542px;background:#fff;border:1px solid #7a7a7a"></div>
<div class="ab" style="left:1473px;top:831px;width:15px;height:15px;background:#fff;border:1px solid #7a7a7a"></div>
<svg class="ab" style="left:1477px;top:837px;" width="7" height="4" viewBox="0 0 7 4"><path d="M0 0 H7 L3.5 4 Z" fill="#6e6e6e"/></svg>
<svg width="990" height="640" style="position:absolute;left:240px;top:209px;overflow:hidden" viewBox="240 209 990 640">
<rect x="250" y="209" width="968" height="634" fill="#fff"/>
<line x1="291" y1="780.5" x2="1118.5" y2="780.5" stroke="#898989" stroke-width="1"/>
<text x="283" y="783.5" text-anchor="end" font-family="Liberation Sans" font-weight="bold" font-size="11.5" fill="#000">0</text>
<line x1="291" y1="711.5" x2="1118.5" y2="711.5" stroke="#898989" stroke-width="1"/>
<text x="283" y="714.5" text-anchor="end" font-family="Liberation Sans" font-weight="bold" font-size="11.5" fill="#000">100</text>
<line x1="291" y1="641.5" x2="1118.5" y2="641.5" stroke="#898989" stroke-width="1"/>
<text x="283" y="644.5" text-anchor="end" font-family="Liberation Sans" font-weight="bold" font-size="11.5" fill="#000">200</text>
<line x1="291" y1="572.5" x2="1118.5" y2="572.5" stroke="#898989" stroke-width="1"/>
<text x="283" y="575.5" text-anchor="end" font-family="Liberation Sans" font-weight="bold" font-size="11.5" fill="#000">300</text>
<line x1="291" y1="503.5" x2="1118.5" y2="503.5" stroke="#898989" stroke-width="1"/>
<text x="283" y="506.5" text-anchor="end" font-family="Liberation Sans" font-weight="bold" font-size="11.5" fill="#000">400</text>
<line x1="291" y1="434.5" x2="1118.5" y2="434.5" stroke="#898989" stroke-width="1"/>
<text x="283" y="437.5" text-anchor="end" font-family="Liberation Sans" font-weight="bold" font-size="11.5" fill="#000">500</text>
<line x1="291" y1="364.5" x2="1118.5" y2="364.5" stroke="#898989" stroke-width="1"/>
<text x="283" y="367.5" text-anchor="end" font-family="Liberation Sans" font-weight="bold" font-size="11.5" fill="#000">600</text>
<line x1="291" y1="295.5" x2="1118.5" y2="295.5" stroke="#898989" stroke-width="1"/>
<text x="283" y="298.5" text-anchor="end" font-family="Liberation Sans" font-weight="bold" font-size="11.5" fill="#000">700</text>
<line x1="291" y1="226.5" x2="1118.5" y2="226.5" stroke="#898989" stroke-width="1"/>
<text x="283" y="229.5" text-anchor="end" font-family="Liberation Sans" font-weight="bold" font-size="11.5" fill="#000">800</text>
<rect x="306.52" y="377" width="14.70" height="403" fill="#ff0000"/>
<rect x="321.22" y="585" width="14.70" height="195" fill="#00b050"/>
<rect x="357.96" y="485" width="14.70" height="295" fill="#ff0000"/>
<rect x="372.66" y="641" width="14.70" height="139" fill="#00b050"/>
<rect x="409.40" y="670" width="14.70" height="110" fill="#ff0000"/>
<rect x="424.09" y="697" width="14.70" height="83" fill="#00b050"/>
<rect x="460.83" y="706" width="14.70" height="74" fill="#ff0000"/>
<rect x="475.53" y="694" width="14.70" height="86" fill="#00b050"/>
<rect x="512.27" y="265" width="14.70" height="515" fill="#ff0000"/>
<rect x="526.97" y="404" width="14.70" height="376" fill="#00b050"/>
<rect x="563.71" y="465" width="14.70" height="315" fill="#ff0000"/>
<rect x="578.41" y="544" width="14.70" height="236" fill="#00b050"/>
<rect x="615.15" y="299" width="14.70" height="481" fill="#ff0000"/>
<rect x="629.84" y="328" width="14.70" height="452" fill="#00b050"/>
<rect x="666.58" y="593" width="14.70" height="187" fill="#ff0000"/>
<rect x="681.28" y="575" width="14.70" height="205" fill="#00b050"/>
<rect x="718.02" y="337" width="14.70" height="443" fill="#ff0000"/>
<rect x="732.72" y="589" width="14.70" height="191" fill="#00b050"/>
<rect x="769.46" y="460" width="14.70" height="320" fill="#ff0000"/>
<rect x="784.16" y="471" width="14.70" height="309" fill="#00b050"/>
<rect x="820.90" y="438" width="14.70" height="342" fill="#ff0000"/>
<rect x="835.59" y="443" width="14.70" height="337" fill="#00b050"/>
<rect x="872.33" y="672" width="14.70" height="108" fill="#ff0000"/>
<rect x="887.03" y="542" width="14.70" height="238" fill="#00b050"/>
<rect x="923.77" y="438" width="14.70" height="342" fill="#ff0000"/>
<rect x="938.47" y="400" width="14.70" height="380" fill="#00b050"/>
<rect x="975.21" y="427" width="14.70" height="353" fill="#ff0000"/>
<rect x="989.91" y="275" width="14.70" height="505" fill="#00b050"/>
<rect x="1026.65" y="485" width="14.70" height="295" fill="#ff0000"/>
<rect x="1041.34" y="270" width="14.70" height="510" fill="#00b050"/>
<rect x="1078.08" y="665" width="14.70" height="115" fill="#ff0000"/>
<rect x="1092.78" y="512" width="14.70" height="268" fill="#00b050"/>
<line x1="295.5" y1="226" x2="295.5" y2="831" stroke="#898989" stroke-width="1"/>
<line x1="346.5" y1="780" x2="346.5" y2="806" stroke="#898989" stroke-width="1"/>
<line x1="398.5" y1="780" x2="398.5" y2="806" stroke="#898989" stroke-width="1"/>
<line x1="449.5" y1="780" x2="449.5" y2="806" stroke="#898989" stroke-width="1"/>
<line x1="501.5" y1="780" x2="501.5" y2="806" stroke="#898989" stroke-width="1"/>
<line x1="501.5" y1="807" x2="501.5" y2="831" stroke="#898989" stroke-width="1"/>
<line x1="552.5" y1="780" x2="552.5" y2="806" stroke="#898989" stroke-width="1"/>
<line x1="604.5" y1="780" x2="604.5" y2="806" stroke="#898989" stroke-width="1"/>
<line x1="655.5" y1="780" x2="655.5" y2="806" stroke="#898989" stroke-width="1"/>
<line x1="706.5" y1="780" x2="706.5" y2="806" stroke="#898989" stroke-width="1"/>
<line x1="706.5" y1="807" x2="706.5" y2="831" stroke="#898989" stroke-width="1"/>
<line x1="758.5" y1="780" x2="758.5" y2="806" stroke="#898989" stroke-width="1"/>
<line x1="809.5" y1="780" x2="809.5" y2="806" stroke="#898989" stroke-width="1"/>
<line x1="861.5" y1="780" x2="861.5" y2="806" stroke="#898989" stroke-width="1"/>
<line x1="912.5" y1="780" x2="912.5" y2="806" stroke="#898989" stroke-width="1"/>
<line x1="912.5" y1="807" x2="912.5" y2="831" stroke="#898989" stroke-width="1"/>
<line x1="964.5" y1="780" x2="964.5" y2="806" stroke="#898989" stroke-width="1"/>
<line x1="1015.5" y1="780" x2="1015.5" y2="806" stroke="#898989" stroke-width="1"/>
<line x1="1067.5" y1="780" x2="1067.5" y2="806" stroke="#898989" stroke-width="1"/>
<line x1="1118.5" y1="780" x2="1118.5" y2="806" stroke="#898989" stroke-width="1"/>
<line x1="1118.5" y1="807" x2="1118.5" y2="831" stroke="#898989" stroke-width="1"/>
<text x="321.2" y="801" text-anchor="middle" font-family="Liberation Sans" font-weight="bold" font-size="11.5" fill="#000">2018</text>
<text x="372.7" y="801" text-anchor="middle" font-family="Liberation Sans" font-weight="bold" font-size="11.5" fill="#000">2019</text>
<text x="424.1" y="801" text-anchor="middle" font-family="Liberation Sans" font-weight="bold" font-size="11.5" fill="#000">2020</text>
<text x="475.5" y="801" text-anchor="middle" font-family="Liberation Sans" font-weight="bold" font-size="11.5" fill="#000">2021</text>
<text x="527.0" y="801" text-anchor="middle" font-family="Liberation Sans" font-weight="bold" font-size="11.5" fill="#000">2018</text>
<text x="578.4" y="801" text-anchor="middle" font-family="Liberation Sans" font-weight="bold" font-size="11.5" fill="#000">2019</text>
<text x="629.8" y="801" text-anchor="middle" font-family="Liberation Sans" font-weight="bold" font-size="11.5" fill="#000">2020</text>
<text x="681.3" y="801" text-anchor="middle" font-family="Liberation Sans" font-weight="bold" font-size="11.5" fill="#000">2021</text>
<text x="732.7" y="801" text-anchor="middle" font-family="Liberation Sans" font-weight="bold" font-size="11.5" fill="#000">2018</text>
<text x="784.2" y="801" text-anchor="middle" font-family="Liberation Sans" font-weight="bold" font-size="11.5" fill="#000">2019</text>
<text x="835.6" y="801" text-anchor="middle" font-family="Liberation Sans" font-weight="bold" font-size="11.5" fill="#000">2020</text>
<text x="887.0" y="801" text-anchor="middle" font-family="Liberation Sans" font-weight="bold" font-size="11.5" fill="#000">2021</text>
<text x="938.5" y="801" text-anchor="middle" font-family="Liberation Sans" font-weight="bold" font-size="11.5" fill="#000">2018</text>
<text x="989.9" y="801" text-anchor="middle" font-family="Liberation Sans" font-weight="bold" font-size="11.5" fill="#000">2019</text>
<text x="1041.3" y="801" text-anchor="middle" font-family="Liberation Sans" font-weight="bold" font-size="11.5" fill="#000">2020</text>
<text x="1092.8" y="801" text-anchor="middle" font-family="Liberation Sans" font-weight="bold" font-size="11.5" fill="#000">2021</text>
<text x="398.4" y="826" text-anchor="middle" font-family="Liberation Sans" font-weight="bold" font-size="11" fill="#000">AUTOPILOT</text>
<text x="604.1" y="826" text-anchor="middle" font-family="Liberation Sans" font-weight="bold" font-size="11" fill="#000">BIRDS</text>
<text x="809.9" y="826" text-anchor="middle" font-family="Liberation Sans" font-weight="bold" font-size="11" fill="#000">CONCERTLY</text>
<text x="1015.6" y="826" text-anchor="middle" font-family="Liberation Sans" font-weight="bold" font-size="11" fill="#000">MINDWARS</text>
<rect x="1140" y="509" width="7" height="7" fill="#ff0000"/>
<text x="1150" y="516" font-family="Liberation Sans" font-weight="bold" font-size="11" fill="#000">Created</text>
<rect x="1140" y="533" width="7" height="7" fill="#00b050"/>
<text x="1150" y="540" font-family="Liberation Sans" font-weight="bold" font-size="11" fill="#000">Resolved</text>
<rect x="254.5" y="212" width="958" height="625" fill="none" stroke="#8a8a8a" stroke-width="1.5"/>
<circle cx="254.5" cy="212" r="4.5" fill="#fff" stroke="#8a8a8a" stroke-width="2"/>
<circle cx="254.5" cy="524.5" r="4.5" fill="#fff" stroke="#8a8a8a" stroke-width="2"/>
<circle cx="254.5" cy="837" r="4.5" fill="#fff" stroke="#8a8a8a" stroke-width="2"/>
<circle cx="733.5" cy="212" r="4.5" fill="#fff" stroke="#8a8a8a" stroke-width="2"/>
<circle cx="733.5" cy="837" r="4.5" fill="#fff" stroke="#8a8a8a" stroke-width="2"/>
<circle cx="1212.5" cy="212" r="4.5" fill="#fff" stroke="#8a8a8a" stroke-width="2"/>
<circle cx="1212.5" cy="524.5" r="4.5" fill="#fff" stroke="#8a8a8a" stroke-width="2"/>
<circle cx="1212.5" cy="837" r="4.5" fill="#fff" stroke="#8a8a8a" stroke-width="2"/>
</svg>
<div class="ab" style="left:1px;top:849px;width:1468px;height:1px;background:#8f8f8f"></div>
<div class="st"></div>
<div class="ab" style="left:1px;top:877px;width:1490px;height:1px;background:#c6c6c6"></div>
<svg class="ab" style="left:28px;top:859px;" width="6" height="8" viewBox="0 0 6 8"><path d="M5 0 V7 L0.5 3.5 Z" fill="#c0c0c0"/></svg>
<svg class="ab" style="left:56px;top:859px;" width="6" height="8" viewBox="0 0 6 8"><path d="M0.5 0 V7 L5 3.5 Z" fill="#c0c0c0"/></svg>
<div class="ab" style="left:101px;top:853px;width:1px;height:20px;background:#9a9a9a"></div>
<div class="a" style="left:114.95px;top:855.82px;font-size:13px;line-height:13px;color:#444;letter-spacing:-0.103px">Created Vs. Resolved</div>
<div class="ab" style="left:254px;top:849px;width:191px;height:24px;background:#fff;border-left:1px solid #9a9a9a;border-right:1px solid #9a9a9a"></div>
<div class="ab" style="left:257px;top:853px;width:186px;height:18px;background:linear-gradient(#ffffff 0%,#eef7e6 40%,#cfe7b7 100%)"></div>
<div class="ab" style="left:254px;top:872px;width:191px;height:2px;background:#217346"></div>
<div class="a" style="left:265.55px;top:856.12px;font-size:13px;line-height:13px;color:#217346;font-weight:700;letter-spacing:-0.137px">Created Vs. Resolved Chart</div>
<div class="a" style="left:457.05px;top:856.12px;font-size:13px;line-height:13px;color:#444;letter-spacing:-0.043px">Creations</div>
<div class="ab" style="left:526px;top:853px;width:1px;height:20px;background:#9a9a9a"></div>
<div class="ab" style="left:529px;top:852px;width:114px;height:22px;background:#92d050"></div>
<div class="a" style="left:539.95px;top:856.62px;font-size:13px;line-height:13px;color:#1a1a1a;letter-spacing:-0.053px">Creations Chart</div>
<div class="ab" style="left:645px;top:853px;width:1px;height:20px;background:#9a9a9a"></div>
<div class="a" style="left:658.85px;top:856.62px;font-size:13px;line-height:13px;color:#444;letter-spacing:-0.074px">Resolutions</div>
<div class="ab" style="left:741px;top:853px;width:1px;height:20px;background:#9a9a9a"></div>
<div class="ab" style="left:744px;top:852px;width:128px;height:22px;background:#92d050"></div>
<div class="a" style="left:755.55px;top:856.62px;font-size:13px;line-height:13px;color:#1a1a1a;letter-spacing:-0.014px">Resolutions Chart</div>
<div class="ab" style="left:874px;top:853px;width:1px;height:20px;background:#9a9a9a"></div>
<div class="ab" style="left:877px;top:852px;width:55px;height:22px;background:#808080"></div>
<div class="a" style="left:887.05px;top:856.62px;font-size:13px;line-height:13px;color:#fff;letter-spacing:-0.476px">Issues</div>
<div class="ab" style="left:934px;top:853px;width:1px;height:20px;background:#9a9a9a"></div>
<svg class="ab" style="left:967px;top:854px;" width="18" height="18" viewBox="0 0 18 18"><circle cx="9" cy="9" r="7.8" fill="none" stroke="#6e6e6e" stroke-width="1.1"/><path d="M9 4.5 V13.5 M4.5 9 H13.5" stroke="#6e6e6e" stroke-width="1.5"/></svg>
<div class="ab" style="left:1287px;top:857px;width:2px;height:2px;background:#a0a0a0"></div>
<div class="ab" style="left:1287px;top:862px;width:2px;height:2px;background:#a0a0a0"></div>
<div class="ab" style="left:1287px;top:867px;width:2px;height:2px;background:#a0a0a0"></div>
<div class="ab" style="left:1304px;top:856px;width:164px;height:15px;background:#fff;border:1px solid #7a7a7a"></div>
<div class="ab" style="left:1304px;top:856px;width:15px;height:15px;background:#fff;border:1px solid #7a7a7a"></div>
<div class="ab" style="left:1453px;top:856px;width:15px;height:15px;background:#fff;border:1px solid #7a7a7a"></div>
<svg class="ab" style="left:1308px;top:860px;" width="6" height="8" viewBox="0 0 6 8"><path d="M5 0 V7 L0.5 3.5 Z" fill="#6e6e6e"/></svg>
<svg class="ab" style="left:1458px;top:860px;" width="6" height="8" viewBox="0 0 6 8"><path d="M0.5 0 V7 L5 3.5 Z" fill="#6e6e6e"/></svg>
<div class="sb"></div>
<div class="a" style="left:8.23px;top:884.06px;font-size:11.5px;line-height:11.5px;color:#333;letter-spacing:-0.500px">Ready</div>
<svg class="ab" style="left:1542px;top:880px;" width="15" height="15" viewBox="0 0 15 15"><path d="M1.5 1.5 H13.5 V13.5 H1.5 Z M5.5 1.5 V13.5 M9.5 1.5 V13.5 M1.5 5.5 H13.5 M1.5 9.5 H13.5" fill="none" stroke="#a0a0a0" stroke-width="1"/></svg>
<svg class="ab" style="left:1582px;top:880px;" width="16" height="15" viewBox="0 0 16 15"><path d="M1.5 1.5 H14.5 V13.5 H1.5 Z M4.5 3.5 H11.5 V11.5 H4.5 Z M6 5.5 H10 M6 7.5 H10 M6 9.5 H10" fill="none" stroke="#a0a0a0" stroke-width="1"/></svg>
<svg class="ab" style="left:1622px;top:880px;" width="16" height="15" viewBox="0 0 16 15"><path d="M1.5 1.5 H14.5 V13.5 H1.5 Z M1.5 9.5 H7.5 V1.5 M5 1.5 V9.5" fill="none" stroke="#a0a0a0" stroke-width="1"/></svg>
<div class="ab" style="left:1656px;top:887px;width:8px;height:1px;background:#444"></div>
<div class="ab" style="left:1669px;top:887px;width:100px;height:1px;background:#555"></div>
<div class="ab" style="left:1716px;top:883px;width:5px;height:11px;background:#666"></div>
<div class="ab" style="left:1774px;top:887px;width:8px;height:1px;background:#444"></div>
<div class="ab" style="left:1777.5px;top:883.5px;width:1px;height:8px;background:#444"></div>
<div class="a" style="left:1794.42px;top:883.16px;font-size:11.5px;line-height:11.5px;color:#444;letter-spacing:-0.591px">98%</div>
<div class="pv"></div>
<div class="a" style="left:1504.92px;top:223.66px;font-size:21.5px;line-height:21.5px;color:#358457;letter-spacing:-0.572px;font-weight:300">PivotChart Fields</div>
<svg class="ab" style="left:1771px;top:229px;" width="9.5" height="5" viewBox="0 0 9.5 5"><path d="M0 0 H9.5 L4.75 5 Z" fill="#6e6e6e"/></svg>
<svg class="ab" style="left:1811px;top:225px;" width="12" height="12" viewBox="0 0 12 12"><path d="M1 1 L11 11 M11 1 L1 11" stroke="#6e6e6e" stroke-width="1.7"/></svg>
<div class="a" style="left:1505.09px;top:262.75px;font-size:12.2px;line-height:12.2px;color:#333;letter-spacing:-0.119px">Choose fields to add to report:</div>
<div class="ab" style="left:1783px;top:255px;width:44px;height:27px;background:#fdfdfd;border:1px solid #a6a6a6"></div>
<svg class="ab" style="left:1791.5px;top:259.5px;" width="17" height="17" viewBox="0 0 17 17"><polygon points="16.30,8.50 16.23,9.52 13.91,9.95 13.67,10.64 13.35,11.30 12.94,11.91 12.46,12.46 13.25,14.69 12.40,15.25 11.48,15.71 9.95,13.91 9.23,14.05 8.50,14.10 7.77,14.05 7.05,13.91 5.52,15.71 4.60,15.25 3.75,14.69 4.54,12.46 4.06,11.91 3.65,11.30 3.33,10.64 3.09,9.95 0.77,9.52 0.70,8.50 0.77,7.48 3.09,7.05 3.33,6.36 3.65,5.70 4.06,5.09 4.54,4.54 3.75,2.31 4.60,1.75 5.52,1.29 7.05,3.09 7.77,2.95 8.50,2.90 9.23,2.95 9.95,3.09 11.48,1.29 12.40,1.75 13.25,2.31 12.46,4.54 12.94,5.09 13.35,5.70 13.67,6.36 13.91,7.05 16.23,7.48" fill="none" stroke="#333" stroke-width="1.1" stroke-linejoin="round"/><circle cx="8.5" cy="8.5" r="2.4" fill="none" stroke="#333" stroke-width="1.1"/></svg>
<svg class="ab" style="left:1815px;top:266px;" width="7" height="4" viewBox="0 0 7 4"><path d="M0 0 H7 L3.5 4 Z" fill="#6e6e6e"/></svg>
<div class="ab" style="left:1504px;top:295px;width:323px;height:20px;background:#fff;border:1px solid #a6a6a6"></div>
<div class="a" style="left:1505.70px;top:297.78px;font-size:12px;line-height:12px;color:#555;letter-spacing:-0.566px">Search</div>
<svg class="ab" style="left:1809px;top:296px;" width="18" height="18" viewBox="0 0 18 18"><circle cx="11.4" cy="6.3" r="5.2" fill="none" stroke="#333" stroke-width="1.1"/><path d="M7.6 10.1 L2 15.8" stroke="#333" stroke-width="1.2"/></svg>
<div class="ab" style="left:1504px;top:331px;width:323px;height:207px;background:#fdfdfd"></div>
<div class="ab" style="left:1506px;top:332px;width:13px;height:13px;background:#fff;border:1px solid #6e6e6e"></div>
<svg class="ab" style="left:1506px;top:332px;" width="13" height="13" viewBox="0 0 13 13"><path d="M2.5 6.5 L5.2 9.5 L10.5 3" fill="none" stroke="#6e6e6e" stroke-width="1.2"/></svg>
<div class="a" style="left:1525.00px;top:333.78px;font-size:12px;line-height:12px;color:#262626;font-weight:700;letter-spacing:-0.208px">Key</div>
<div class="ab" style="left:1506px;top:351px;width:13px;height:13px;background:#fff;border:1px solid #6e6e6e"></div>
<svg class="ab" style="left:1506px;top:351px;" width="13" height="13" viewBox="0 0 13 13"><path d="M2.5 6.5 L5.2 9.5 L10.5 3" fill="none" stroke="#6e6e6e" stroke-width="1.2"/></svg>
<div class="a" style="left:1525.00px;top:352.78px;font-size:12px;line-height:12px;color:#262626;font-weight:700;letter-spacing:-0.173px">Project Key</div>
<div class="ab" style="left:1506px;top:370px;width:13px;height:13px;background:#fff;border:1px solid #6e6e6e"></div>
<div class="a" style="left:1525.00px;top:371.78px;font-size:12px;line-height:12px;color:#262626;letter-spacing:-0.359px">Issue Type</div>
<div class="ab" style="left:1506px;top:389px;width:13px;height:13px;background:#fff;border:1px solid #6e6e6e"></div>
<div class="a" style="left:1525.00px;top:390.78px;font-size:12px;line-height:12px;color:#262626">Priority</div>
<div class="ab" style="left:1506px;top:408px;width:13px;height:13px;background:#fff;border:1px solid #6e6e6e"></div>
<div class="a" style="left:1525.00px;top:409.78px;font-size:12px;line-height:12px;color:#262626">Status</div>
<div class="ab" style="left:1506px;top:427px;width:13px;height:13px;background:#fff;border:1px solid #6e6e6e"></div>
<div class="a" style="left:1525.00px;top:428.78px;font-size:12px;line-height:12px;color:#262626">Resolution</div>
<div class="ab" style="left:1506px;top:446px;width:13px;height:13px;background:#fff;border:1px solid #6e6e6e"></div>
<div class="a" style="left:1525.00px;top:447.78px;font-size:12px;line-height:12px;color:#262626">Assignee</div>
<div class="ab" style="left:1506px;top:465px;width:13px;height:13px;background:#fff;border:1px solid #6e6e6e"></div>
<div class="a" style="left:1525.00px;top:466.78px;font-size:12px;line-height:12px;color:#262626">Reporter</div>
<div class="ab" style="left:1506px;top:484px;width:13px;height:13px;background:#fff;border:1px solid #6e6e6e"></div>
<div class="a" style="left:1525.00px;top:485.78px;font-size:12px;line-height:12px;color:#262626">Affects Version/s</div>
<div class="ab" style="left:1506px;top:503px;width:13px;height:13px;background:#fff;border:1px solid #6e6e6e"></div>
<div class="a" style="left:1525.00px;top:504.78px;font-size:12px;line-height:12px;color:#262626">Fix Version/s</div>
<div class="ab" style="left:1506px;top:522px;width:13px;height:13px;background:#fff;border:1px solid #6e6e6e"></div>
<div class="a" style="left:1525.00px;top:523.78px;font-size:12px;line-height:12px;color:#262626">Component/s</div>
<div class="ab" style="left:1811px;top:333px;width:15px;height:203px;background:#efefef"></div>
<div class="ab" style="left:1812px;top:333px;width:14px;height:15px;background:#fff;border:1px solid #7a7a7a"></div>
<svg class="ab" style="left:1815.5px;top:338px;" width="7" height="4" viewBox="0 0 7 4"><path d="M0 4 H7 L3.5 0 Z" fill="#6e6e6e"/></svg>
<div class="ab" style="left:1812px;top:349px;width:14px;height:108px;background:#fff;border:1px solid #7a7a7a"></div>
<div class="ab" style="left:1812px;top:521px;width:14px;height:15px;background:#fff;border:1px solid #7a7a7a"></div>
<svg class="ab" style="left:1815.5px;top:526px;" width="7" height="4" viewBox="0 0 7 4"><path d="M0 0 H7 L3.5 4 Z" fill="#6e6e6e"/></svg>
<div class="ab" style="left:1505px;top:554px;width:326px;height:1px;background:repeating-linear-gradient(90deg,#b4b4b4 0 1px,transparent 1px 3px)"></div>
<div class="a" style="left:1507.70px;top:560.78px;font-size:12px;line-height:12px;color:#333;letter-spacing:-0.169px">Drag fields between areas below:</div>
<svg class="ab" style="left:1511px;top:593px;" width="12" height="12" viewBox="0 0 12 12"><path d="M0 0.2 H11.2 L7 5 V11 H4.4 V5 Z" fill="#999"/></svg>
<div class="a" style="left:1529.89px;top:593.95px;font-size:12.2px;line-height:12.2px;color:#333;letter-spacing:-0.245px">Filters</div>
<div class="ab" style="left:1666px;top:591px;width:1px;height:232px;background:#c6c6c6"></div>
<svg class="ab" style="left:1673px;top:594px;" width="12" height="11" viewBox="0 0 12 11"><rect x="1" y="0" width="2.6" height="10" fill="#8a8a8a"/><path d="M5.5 0 V10 M8 0 V10 M10.5 0 V10" stroke="#8a8a8a" stroke-width="0.9"/></svg>
<div class="a" style="left:1691.99px;top:593.95px;font-size:12.2px;line-height:12.2px;color:#333;letter-spacing:-0.457px">Legend (Series)</div>
<div class="ab" style="left:1507px;top:611px;width:153px;height:89px;background:#fdfdfd"></div>
<div class="ab" style="left:1669px;top:611px;width:158px;height:89px;background:#fdfdfd"></div>
<div class="ab" style="left:1670px;top:613px;width:156px;height:19px;background:#fff;border:1px solid #a6a6a6"></div>
<div class="a" style="left:1676.89px;top:617.05px;font-size:12.2px;line-height:12.2px;color:#262626;letter-spacing:-0.361px">Event Type</div>
<svg class="ab" style="left:1808.5px;top:620px;" width="8" height="4.5" viewBox="0 0 8 4.5"><path d="M0 0 H8 L4.0 4.5 Z" fill="#333"/></svg>
<div class="ab" style="left:1507px;top:706px;width:320px;height:1px;background:#c6c6c6"></div>
<svg class="ab" style="left:1511px;top:716px;" width="12" height="10" viewBox="0 0 12 10"><rect x="0" y="0" width="10" height="2" fill="#8a8a8a"/><path d="M0 4 H10 M0 6.5 H10 M0 9 H10" stroke="#8a8a8a" stroke-width="0.9"/></svg>
<div class="a" style="left:1529.59px;top:715.75px;font-size:12.2px;line-height:12.2px;color:#333;letter-spacing:-0.241px">Axis (Categories)</div>
<svg class="ab" style="left:1674px;top:715px;" width="11" height="11" viewBox="0 0 11 11"><path d="M9.5 2.5 V0.8 H1 L5.5 5.2 L1 9.6 H9.5 V8" fill="none" stroke="#8a8a8a" stroke-width="1.1"/></svg>
<div class="a" style="left:1691.39px;top:715.75px;font-size:12.2px;line-height:12.2px;color:#333;letter-spacing:-0.248px">Values</div>
<div class="ab" style="left:1507px;top:733px;width:153px;height:90px;background:#fdfdfd"></div>
<div class="ab" style="left:1669px;top:733px;width:158px;height:90px;background:#fdfdfd"></div>
<div class="ab" style="left:1508px;top:735px;width:151px;height:19px;background:#fff;border:1px solid #a6a6a6"></div>
<div class="a" style="left:1514.59px;top:739.05px;font-size:12.2px;line-height:12.2px;color:#262626;letter-spacing:-0.241px">Project Key</div>
<svg class="ab" style="left:1641.5px;top:741.5px;" width="8" height="4.5" viewBox="0 0 8 4.5"><path d="M0 0 H8 L4.0 4.5 Z" fill="#333"/></svg>
<div class="ab" style="left:1508px;top:756px;width:151px;height:19px;background:#fff;border:1px solid #a6a6a6"></div>
<div class="a" style="left:1514.59px;top:760.05px;font-size:12.2px;line-height:12.2px;color:#262626">Year</div>
<svg class="ab" style="left:1641.5px;top:762.5px;" width="8" height="4.5" viewBox="0 0 8 4.5"><path d="M0 0 H8 L4.0 4.5 Z" fill="#333"/></svg>
<div class="ab" style="left:1508px;top:777px;width:151px;height:19px;background:#fff;border:1px solid #a6a6a6"></div>
<div class="a" style="left:1514.59px;top:781.05px;font-size:12.2px;line-height:12.2px;color:#262626">Month</div>
<svg class="ab" style="left:1641.5px;top:783.5px;" width="8" height="4.5" viewBox="0 0 8 4.5"><path d="M0 0 H8 L4.0 4.5 Z" fill="#333"/></svg>
<div class="ab" style="left:1508px;top:798px;width:151px;height:19px;background:#fff;border:1px solid #a6a6a6"></div>
<div class="a" style="left:1517.99px;top:802.05px;font-size:12.2px;line-height:12.2px;color:#262626">Day</div>
<svg class="ab" style="left:1641.5px;top:804.5px;" width="8" height="4.5" viewBox="0 0 8 4.5"><path d="M0 0 H8 L4.0 4.5 Z" fill="#333"/></svg>
<div class="ab" style="left:1670px;top:735px;width:156px;height:19px;background:#fff;border:1px solid #a6a6a6"></div>
<div class="a" style="left:1676.69px;top:739.05px;font-size:12.2px;line-height:12.2px;color:#262626;letter-spacing:-0.663px">Issues</div>
<svg class="ab" style="left:1808.5px;top:741.5px;" width="8" height="4.5" viewBox="0 0 8 4.5"><path d="M0 0 H8 L4.0 4.5 Z" fill="#333"/></svg>
<div class="ab" style="left:1510px;top:848px;width:13px;height:13px;background:#fff;border:1px solid #888"></div>
<div class="a" style="left:1528.99px;top:848.75px;font-size:12.2px;line-height:12.2px;color:#333;letter-spacing:-0.225px">Defer Layout Update</div>
<div class="ab" style="left:1780px;top:843px;width:46px;height:21px;background:#f8f8f8"></div>
<div class="a" style="left:1784.00px;top:848.18px;font-size:12px;line-height:12px;color:#a6a6a6;letter-spacing:-0.021px">Update</div>
<div class="ab" style="left:1491px;top:208px;width:1px;height:669px;background:#9a9a9a"></div>
</body></html>
